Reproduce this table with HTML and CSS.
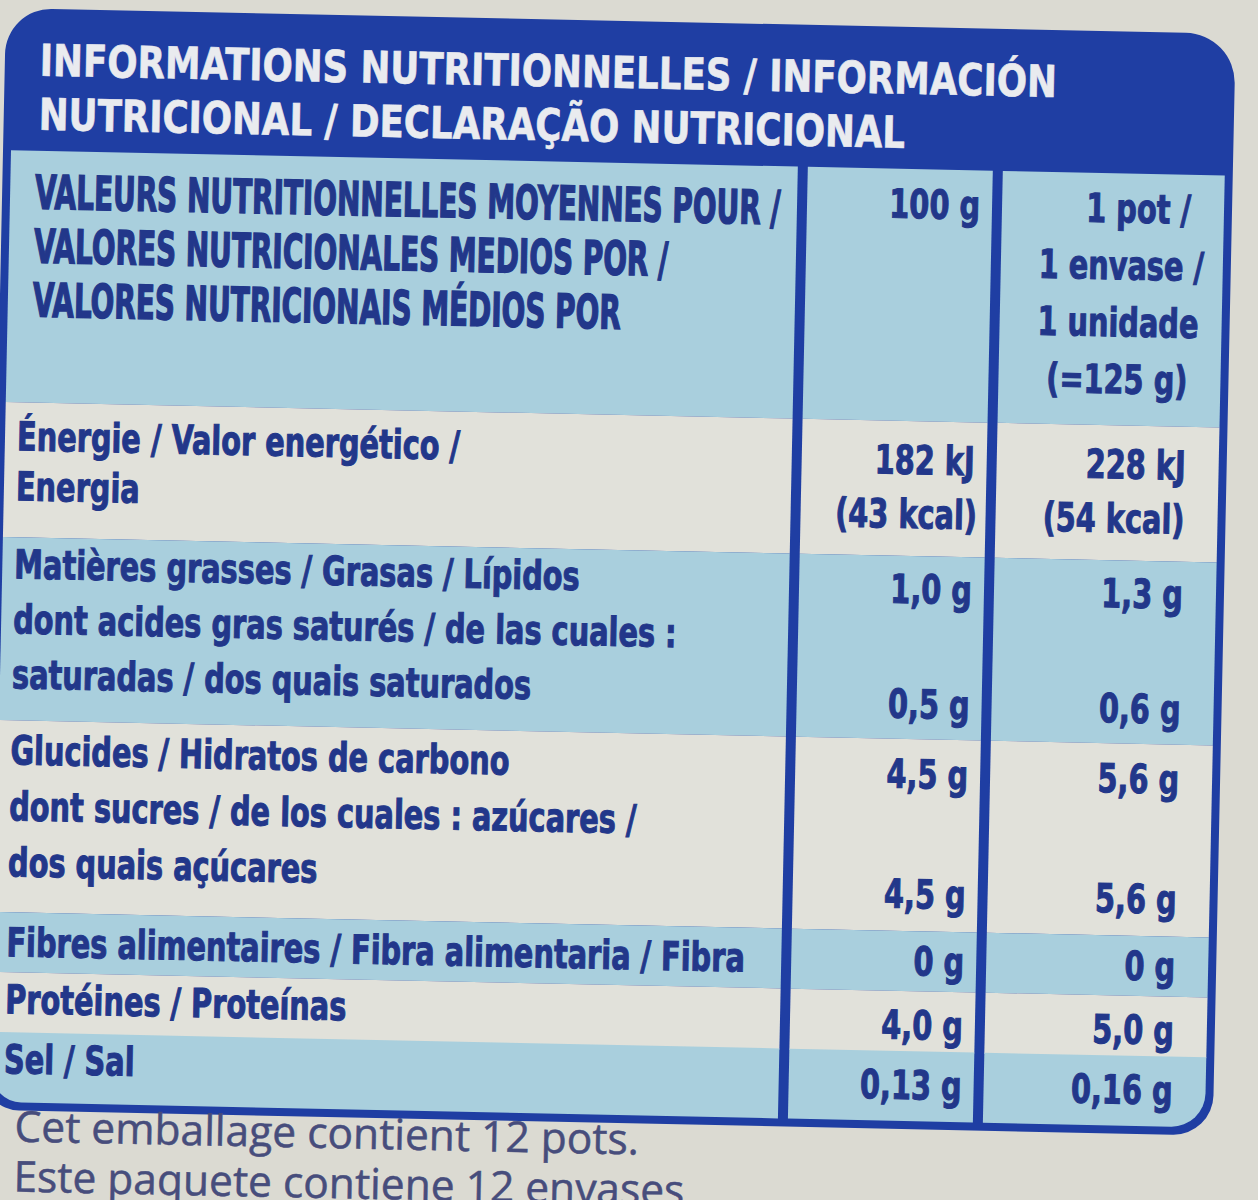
FILE: index.html
```html
<!DOCTYPE html>
<html lang="fr">
<head>
<meta charset="utf-8">
<title>Informations nutritionnelles</title>
<link rel="stylesheet" href="styles.css">
</head>
<body>
<main class="label">
  <section class="table">
    <header class="title">
      <div class="tl">INFORMATIONS NUTRITIONNELLES / INFORMACIÓN</div>
      <div class="tl">NUTRICIONAL / DECLARAÇÃO NUTRICIONAL</div>
    </header>

    <div class="row r-head tint">
      <div class="cell name head-name">
        <span class="caps-line">VALEURS NUTRITIONNELLES MOYENNES POUR /</span>
        <span class="caps-line">VALORES NUTRICIONALES MEDIOS POR /</span>
        <span class="caps-line">VALORES NUTRICIONAIS MÉDIOS POR</span>
      </div>
      <div class="cell val head-val"><span class="t">100 g</span></div>
      <div class="cell val portion head-val"><span class="t">1 pot /<br>1 envase /<br>1 unidade<br>(=125 g)</span></div>
    </div>

    <div class="row r-energy plain">
      <div class="cell name"><span class="t">Énergie / Valor energético /<br>Energia</span></div>
      <div class="cell val"><span class="t">182 kJ<br>(43 kcal)</span></div>
      <div class="cell val portion"><span class="t">228 kJ<br>(54 kcal)</span></div>
    </div>

    <div class="row r-fat tint">
      <div class="cell name"><span class="t">Matières grasses / Grasas / Lípidos<br>dont acides gras saturés / de las cuales :<br>saturadas / dos quais saturados</span></div>
      <div class="cell val split"><span class="t">1,0 g</span><span class="t">0,5 g</span></div>
      <div class="cell val portion split"><span class="t">1,3 g</span><span class="t">0,6 g</span></div>
    </div>

    <div class="row r-carb plain">
      <div class="cell name"><span class="t">Glucides / Hidratos de carbono<br>dont sucres / de los cuales : azúcares /<br>dos quais açúcares</span></div>
      <div class="cell val split"><span class="t">4,5 g</span><span class="t">4,5 g</span></div>
      <div class="cell val portion split"><span class="t">5,6 g</span><span class="t">5,6 g</span></div>
    </div>

    <div class="row r-fibre tint">
      <div class="cell name"><span class="t">Fibres alimentaires / Fibra alimentaria / Fibra</span></div>
      <div class="cell val"><span class="t">0 g</span></div>
      <div class="cell val portion"><span class="t">0 g</span></div>
    </div>

    <div class="row r-prot plain">
      <div class="cell name"><span class="t">Protéines / Proteínas</span></div>
      <div class="cell val"><span class="t">4,0 g</span></div>
      <div class="cell val portion"><span class="t">5,0 g</span></div>
    </div>

    <div class="row r-salt tint">
      <div class="cell name"><span class="t">Sel / Sal</span></div>
      <div class="cell val"><span class="t">0,13 g</span></div>
      <div class="cell val portion"><span class="t">0,16 g</span></div>
    </div>
  </section>

  <p class="note">Cet emballage contient 12 pots.<br>Este paquete contiene 12 envases</p>
</main>
</body>
</html>
```

FILE: styles.css
```css
* {
  box-sizing: border-box;
  margin: 0;
  padding: 0;
}

html {
  background: #dbdad2;
}

body {
  width: 1258px;
  height: 1200px;
  overflow: hidden;
  background: #dbdad2;
  font-family: "DejaVu Sans Condensed", "DejaVu Sans", sans-serif;
  font-weight: 700;
  color: #22378a;
}

.label {
  width: 1230px;
  margin: 8px 0 0 6px;
  transform: rotate(1.2deg);
  transform-origin: 0 0;
}

.table {
  background: #1f3ea3;
  border-radius: 46px 50px 40px 36px;
  padding: 0 8px 8px;
  overflow: hidden;
}

/* title band */
.title {
  height: 142px;
  padding: 25px 0 0 27px;
  color: #e9ebef;
  font-size: 44px;
  line-height: 54px;
  white-space: nowrap;
  -webkit-text-stroke: 0.6px #e9ebef;
}

.tl {
  transform: scaleX(0.9);
  transform-origin: 0 50%;
}

/* grid rows */
.row {
  display: grid;
  grid-template-columns: 787px 185px 222px;
  column-gap: 10px;
}

.tint .cell {
  background: #a9cfdd;
}

.plain .cell {
  background: #e1e1da;
}

.cell {
  font-size: 40px;
  line-height: 54px;
  white-space: nowrap;
  -webkit-text-stroke: 1px #22378a;
}

.t {
  display: block;
  transform: scaleX(0.8);
  transform-origin: 0 50%;
}

.name {
  padding-left: 12px;
}

.val {
  text-align: right;
  padding-right: 12px;
}

.val .t {
  transform-origin: 100% 50%;
}

.val.portion {
  padding-right: 33px;
}

.split {
  display: flex;
  flex-direction: column;
  justify-content: space-between;
}

/* header row */
.r-head {
  height: 252px;
}

.head-name {
  padding-top: 15px;
  padding-left: 25px;
}

.caps-line {
  display: block;
  font-size: 47px;
  line-height: 54px;
  transform: scaleX(0.66);
  transform-origin: 0 50%;
  -webkit-text-stroke: 1.4px #22378a;
}

.head-val {
  padding-top: 7px;
  line-height: 57px;
}

/* energy */
.r-energy {
  height: 135px;
}

.r-energy .name {
  padding-top: 9px;
  line-height: 50px;
}

.r-energy .val {
  padding-top: 12px;
}

/* fat */
.r-fat {
  height: 183px;
}

.r-fat .name {
  line-height: 55px;
}

.r-fat .val {
  padding-top: 6px;
  padding-bottom: 8px;
}

/* carbohydrates */
.r-carb {
  height: 192px;
}

.r-carb .name {
  padding-top: 2px;
  line-height: 56px;
}

.r-carb .val {
  padding-top: 8px;
  padding-bottom: 10px;
}

/* fibre, protein, salt */
.r-fibre,
.r-prot {
  height: 60px;
}

.r-fibre .cell {
  padding-top: 3px;
}

.r-prot .val,
.r-salt .val {
  padding-top: 7px;
}

.r-salt {
  height: 70px;
}

.r-salt .cell:first-child {
  border-bottom-left-radius: 30px;
}

.r-salt .cell:last-child {
  border-bottom-right-radius: 34px;
}

/* footer note */
.note {
  margin-top: -10px;
  padding-left: 32px;
  font-family: "Open Sans", "Liberation Sans", sans-serif;
  font-weight: 400;
  font-size: 42.5px;
  line-height: 50px;
  color: #474d7c;
  white-space: nowrap;
  -webkit-text-stroke: 0.5px #474d7c;
}
```
